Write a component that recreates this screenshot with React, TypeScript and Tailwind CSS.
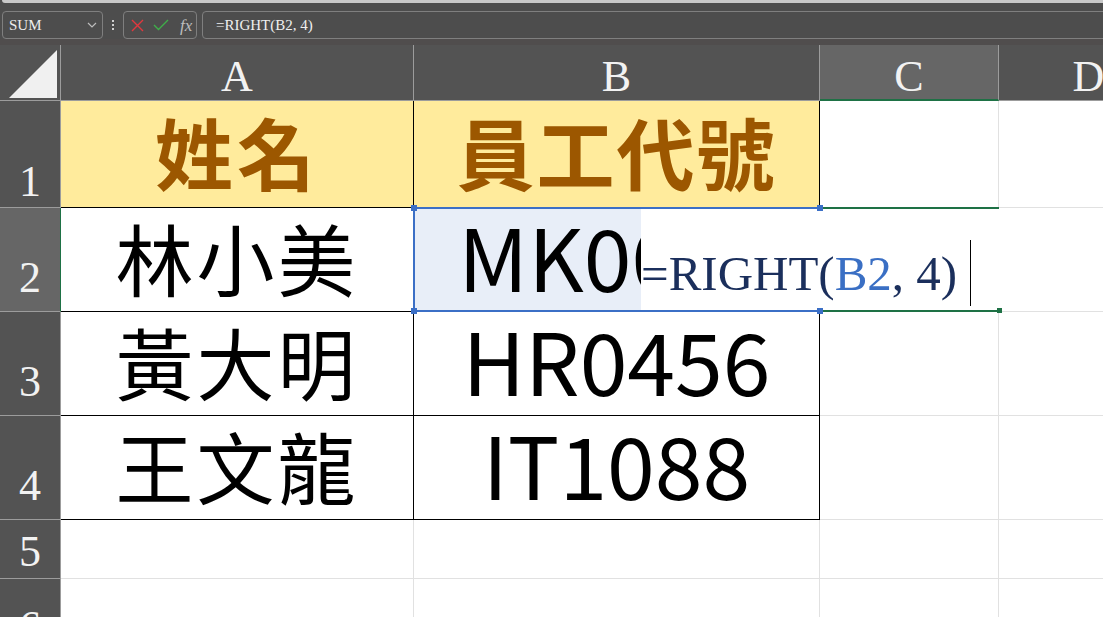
import React from "react";

const hdr = "font-['Liberation_Serif',serif] text-[44px] leading-none text-[#f2f2f2]";
const cjk = "font-['Noto_Sans_CJK_TC','Noto_Sans_CJK_SC',sans-serif] leading-none";

function ColHead({ label, active, last }: { label: string; active?: boolean; last?: boolean }) {
  return (
    <div
      className={
        "flex justify-center pt-[10px] " +
        (active ? "bg-[#666666] border-b-2 border-b-[#1e7145] " : "bg-[#535353] border-b border-b-[#9c9c9c] ") +
        (last ? "" : "border-r border-r-[#9c9c9c]")
      }
    >
      <span className={hdr}>{label}</span>
    </div>
  );
}

function RowHead({ label, active, pb }: { label: string; active?: boolean; pb: string }) {
  return (
    <div
      className={
        "flex items-end justify-center border-b border-b-[#9c9c9c] " +
        (active ? "bg-[#666666] border-r border-r-[#1e7145] " : "bg-[#535353] border-r border-r-[#9c9c9c] ") +
        pb
      }
    >
      <span className={hdr}>{label}</span>
    </div>
  );
}

export default function App() {
  return (
    <div className="w-[1103px] h-[617px] overflow-hidden bg-[#4d4d4d] flex flex-col">
      {/* formula bar area */}
      <div className="h-[39px] shrink-0 flex flex-col">
        <div className="h-[3px] ml-[2px] bg-[#c9c9c9] rounded-bl-[4px]" />
        <div className="mt-[8px] h-[28px] flex items-stretch">
          <div className="ml-[2px] w-[101px] border border-[#7f7f7f] rounded-[4px] flex items-center justify-between pl-[6px] pr-[5px]">
            <span className="font-['Liberation_Serif',serif] text-[15px] text-[#ececec] leading-none">SUM</span>
            <svg width="10" height="6" viewBox="0 0 10 6">
              <path d="M1 1 L5 5 L9 1" fill="none" stroke="#bdbdbd" strokeWidth="1.2" />
            </svg>
          </div>
          <div className="w-[20px] flex flex-col items-center justify-center gap-[2px]">
            <div className="w-[2px] h-[2px] bg-[#d0d0d0]" />
            <div className="w-[2px] h-[2px] bg-[#d0d0d0]" />
            <div className="w-[2px] h-[2px] bg-[#d0d0d0]" />
          </div>
          <div className="w-[74px] border border-[#7f7f7f] rounded-[4px] flex items-center pl-[7px] gap-[9px]">
            <svg width="13" height="13" viewBox="0 0 13 13">
              <path d="M1 1 L12 12 M12 1 L1 12" stroke="#e0383e" strokeWidth="1.4" />
            </svg>
            <svg width="16" height="12" viewBox="0 0 16 12">
              <path d="M1 6 L5.5 10.5 L15 1" fill="none" stroke="#3fae49" strokeWidth="1.4" />
            </svg>
            <span className="font-['Liberation_Serif',serif] italic text-[17px] text-[#bdbdbd] leading-none ml-[2px]">fx</span>
          </div>
          <div className="ml-[5px] flex-1 mr-[-8px] border border-[#7f7f7f] rounded-[4px] flex items-center pl-[13px]">
            <span className="font-['Liberation_Serif',serif] text-[15px] text-[#f0f0f0] leading-none">=RIGHT(B2, 4)</span>
          </div>
        </div>
      </div>
      <div className="h-[6px] shrink-0 bg-[#504d4d]" />
      {/* sheet grid */}
      <div className="relative flex-1 overflow-hidden">
        <div className="grid grid-cols-[61px_353px_406px_179px_179px] grid-rows-[56px_107px_104px_104px_104px_59px_80px] bg-white">
          {/* header row */}
          <div className="bg-[#535353] border-r border-r-[#9c9c9c] border-b border-b-[#9c9c9c]">
            <svg width="60" height="55" viewBox="0 0 60 55">
              <polygon points="9,53 57,5 57,53" fill="#f0f0f0" />
            </svg>
          </div>
          <ColHead label="A" />
          <ColHead label="B" />
          <ColHead label="C" active />
          <ColHead label="D" last />

          {/* row 1 */}
          <RowHead label="1" pb="pb-[3px]" />
          <div className="bg-[#ffeb9c] border-r border-r-black border-b border-b-black flex items-center justify-center pb-[6px]">
            <span className={cjk + " text-[78px] font-bold text-[#9c5700] tracking-[4px]"}>姓名</span>
          </div>
          <div className="bg-[#ffeb9c] border-r border-r-black border-b border-b-black flex items-center justify-center pb-[6px]">
            <span className={cjk + " text-[78px] font-bold text-[#9c5700] tracking-[2px]"}>員工代號</span>
          </div>
          <div className="border-r border-r-[#e1e1e1] border-b border-b-[#e1e1e1]" />
          <div className="border-b border-b-[#e1e1e1]" />

          {/* row 2 */}
          <RowHead label="2" active pb="pb-[11px]" />
          <div className="border-r border-r-black border-b border-b-black flex items-center justify-center pb-[6px]">
            <span className={cjk + " text-[78px] text-black tracking-[3px]"}>林小美</span>
          </div>
          <div className="bg-[#e8eef8] border-r border-r-black border-b border-b-black flex items-center justify-center pb-[10px]">
            <span className={cjk + " text-[86px] text-black"}>MK0023</span>
          </div>
          <div className="border-r border-r-[#e1e1e1] border-b border-b-[#e1e1e1]" />
          <div className="border-b border-b-[#e1e1e1]" />

          {/* row 3 */}
          <RowHead label="3" pb="pb-[11px]" />
          <div className="border-r border-r-black border-b border-b-black flex items-center justify-center pb-[6px]">
            <span className={cjk + " text-[78px] text-black tracking-[3px]"}>黃大明</span>
          </div>
          <div className="border-r border-r-black border-b border-b-black flex items-center justify-center pb-[10px]">
            <span className={cjk + " text-[86px] text-black"}>HR0456</span>
          </div>
          <div className="border-r border-r-[#e1e1e1] border-b border-b-[#e1e1e1]" />
          <div className="border-b border-b-[#e1e1e1]" />

          {/* row 4 */}
          <RowHead label="4" pb="pb-[11px]" />
          <div className="border-r border-r-black border-b border-b-black flex items-center justify-center pb-[6px]">
            <span className={cjk + " text-[78px] text-black tracking-[3px]"}>王文龍</span>
          </div>
          <div className="border-r border-r-black border-b border-b-black flex items-center justify-center pb-[10px]">
            <span className={cjk + " text-[86px] text-black"}>IT1088</span>
          </div>
          <div className="border-r border-r-[#e1e1e1] border-b border-b-[#e1e1e1]" />
          <div className="border-b border-b-[#e1e1e1]" />

          {/* row 5 */}
          <RowHead label="5" pb="pb-[4px]" />
          <div className="border-r border-r-[#e1e1e1] border-b border-b-[#e1e1e1]" />
          <div className="border-r border-r-[#e1e1e1] border-b border-b-[#e1e1e1]" />
          <div className="border-r border-r-[#e1e1e1] border-b border-b-[#e1e1e1]" />
          <div className="border-b border-b-[#e1e1e1]" />

          {/* row 6 */}
          <RowHead label="6" pb="pb-[9px]" />
          <div className="border-r border-r-[#e1e1e1]" />
          <div className="border-r border-r-[#e1e1e1]" />
          <div className="border-r border-r-[#e1e1e1]" />
          <div />
        </div>

        {/* selection of B2 */}
        <div className="absolute left-[413px] top-[162px] w-[407px] h-[105px] border-2 border-[#3b6fc6]" />
        {/* in-cell editor overflowing into C2 */}
        <div className="absolute left-[641px] top-[164px] w-[358px] h-[101px] bg-white flex items-end pb-[12px]">
          <span className="font-['Liberation_Serif',serif] text-[49px] leading-none whitespace-nowrap">
            <span className="text-[#1b2f5c]">=RIGHT(</span>
            <span className="text-[#3a6fc4]">B2</span>
            <span className="text-[#1b2f5c]">, 4)</span>
          </span>
          <div className="absolute left-[329px] top-[31px] w-px h-[66px] bg-black" />
        </div>
        <div className="absolute left-[820px] top-[162px] w-[179px] h-[2px] bg-[#1e7145]" />
        <div className="absolute left-[820px] top-[265px] w-[179px] h-[2px] bg-[#1e7145]" />
        <div className="absolute left-[997px] top-[263px] w-[5px] h-[5px] bg-[#1e7145]" />
        {/* handles */}
        <div className="absolute left-[411px] top-[160px] w-[6px] h-[6px] bg-[#3b6fc6]" />
        <div className="absolute left-[817px] top-[160px] w-[6px] h-[6px] bg-[#3b6fc6]" />
        <div className="absolute left-[411px] top-[263px] w-[6px] h-[6px] bg-[#3b6fc6]" />
        <div className="absolute left-[817px] top-[263px] w-[6px] h-[6px] bg-[#3b6fc6]" />
      </div>
    </div>
  );
}
